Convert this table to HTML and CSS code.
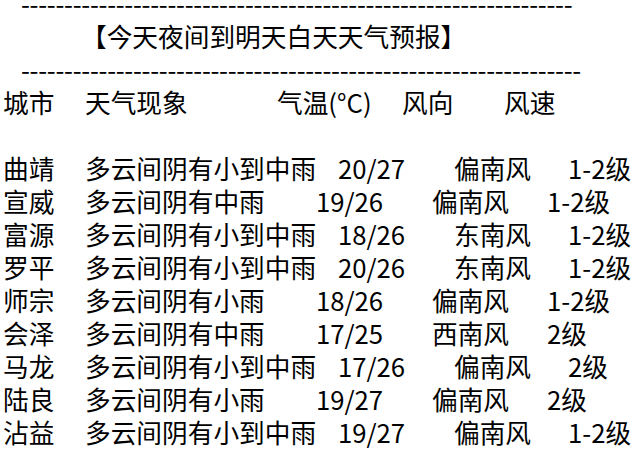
FILE: index.html
```html
<!DOCTYPE html>
<html lang="zh-CN">
<head>
<meta charset="utf-8">
<title>今天夜间到明天白天天气预报</title>
<link rel="stylesheet" href="styles.css">
</head>
<body>
<div class="sheet">
  <div class="line rule">----------------------------------------------------------------</div>
  <div class="line title">【今天夜间到明天白天天气预报】</div>
  <div class="line rule">-----------------------------------------------------------------</div>
  <div class="line row head">
    <span class="c-city">城市</span>
    <span class="h-phen">天气现象</span>
    <span class="h-temp">气温(°C)</span>
    <span class="h-wind">风向</span>
    <span>风速</span>
  </div>
  <div class="line blank"></div>
  <div class="line row a"><span class="c-city">曲靖</span><span class="c-phen">多云间阴有小到中雨</span><span class="c-temp">20/27</span><span class="c-wind">偏南风</span><span>1-2级</span></div>
  <div class="line row b"><span class="c-city">宣威</span><span class="c-phen">多云间阴有中雨</span><span class="c-temp">19/26</span><span class="c-wind">偏南风</span><span>1-2级</span></div>
  <div class="line row a"><span class="c-city">富源</span><span class="c-phen">多云间阴有小到中雨</span><span class="c-temp">18/26</span><span class="c-wind">东南风</span><span>1-2级</span></div>
  <div class="line row a"><span class="c-city">罗平</span><span class="c-phen">多云间阴有小到中雨</span><span class="c-temp">20/26</span><span class="c-wind">东南风</span><span>1-2级</span></div>
  <div class="line row b"><span class="c-city">师宗</span><span class="c-phen">多云间阴有小雨</span><span class="c-temp">18/26</span><span class="c-wind">偏南风</span><span>1-2级</span></div>
  <div class="line row b"><span class="c-city">会泽</span><span class="c-phen">多云间阴有中雨</span><span class="c-temp">17/25</span><span class="c-wind">西南风</span><span>2级</span></div>
  <div class="line row a"><span class="c-city">马龙</span><span class="c-phen">多云间阴有小到中雨</span><span class="c-temp">17/26</span><span class="c-wind">偏南风</span><span>2级</span></div>
  <div class="line row b"><span class="c-city">陆良</span><span class="c-phen">多云间阴有小雨</span><span class="c-temp">19/27</span><span class="c-wind">偏南风</span><span>2级</span></div>
  <div class="line row a"><span class="c-city">沾益</span><span class="c-phen">多云间阴有小到中雨</span><span class="c-temp">19/27</span><span class="c-wind">偏南风</span><span>1-2级</span></div>
</div>
</body>
</html>
```

FILE: styles.css
```css
html, body {
  margin: 0;
  padding: 0;
  background: #ffffff;
}

body {
  overflow: hidden;
}

.sheet {
  margin-top: -14px;
  padding-left: 3px;
  font-family: "Noto Sans CJK SC", "Noto Sans", sans-serif;
  font-size: 25.7px;
  line-height: 33px;
  color: #000000;
}

.line {
  height: 33px;
  white-space: nowrap;
}

.rule {
  padding-left: 18px;
  letter-spacing: -0.3px;
}

.title {
  padding-left: 78px;
}

.row {
  display: flex;
}

.row span {
  flex: none;
}

.c-city { width: 82px; }

.h-phen { width: 192px; }
.h-temp { width: 125px; }
.h-wind { width: 102px; }

.a .c-phen { width: 253px; }
.a .c-temp { width: 116px; }
.a .c-wind { width: 114px; }

.b .c-phen { width: 231px; }
.b .c-temp { width: 116px; }
.b .c-wind { width: 115px; }
```
